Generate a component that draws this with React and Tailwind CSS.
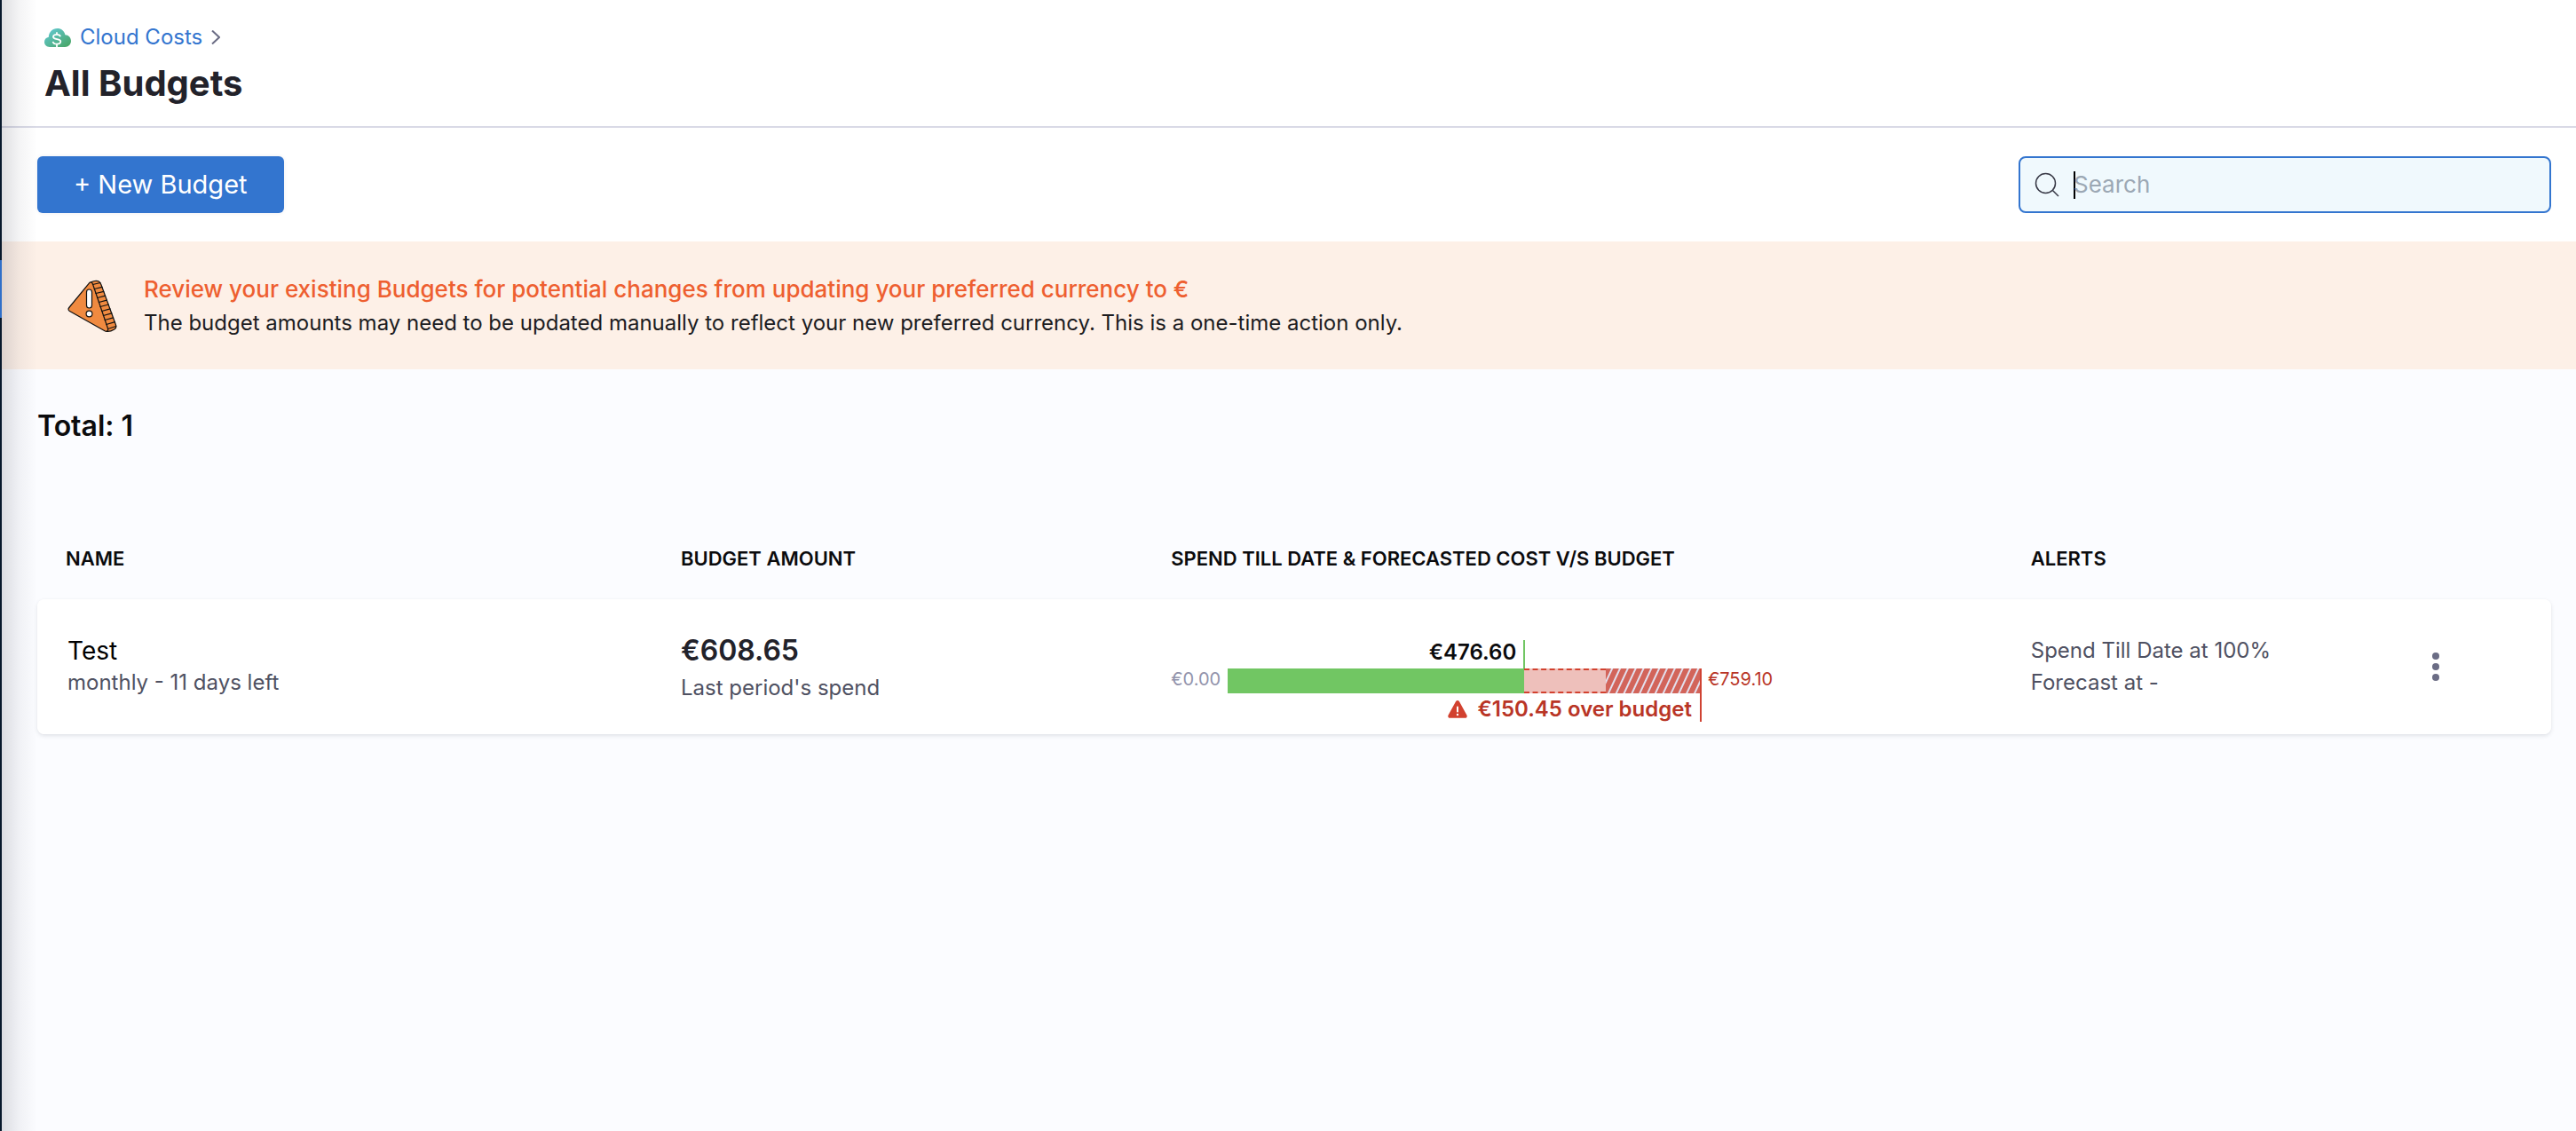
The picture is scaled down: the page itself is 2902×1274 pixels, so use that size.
const BUDGET = 608.65
const SPENT = 476.6
const FORECAST = 759.1

const percent = (value) => `${(value / FORECAST) * 100}%`

function CloudCostIcon() {
  return (
    <svg viewBox="0 0 30 21" className="h-[21px] w-[30px]" aria-hidden="true">
      <defs>
        <linearGradient id="cloud" x1="0" y1="0" x2="1" y2="1">
          <stop offset="0.15" stopColor="#5fc6c9" />
          <stop offset="1" stopColor="#47a35f" />
        </linearGradient>
      </defs>
      <path
        fill="url(#cloud)"
        d="M6 21C2.500 21 0 18.600 0 15.300 0 12.300 2 10.200 4.800 9.700 5.100 4 9.200 0 14.500 0c4.600 0 7.900 2.700 8.900 7.200 3.800.2 6.600 3 6.600 6.800 0 4-2.900 7-6.800 7z"
      />
      <path
        fill="none"
        stroke="#fff"
        strokeWidth="1.800"
        d="M18 9.200C17.700 7.700 16.300 6.900 14 6.900c-2.400 0-4 .9-4 2.600 0 3.800 8.300 1.600 8.300 5.300 0 1.800-1.700 2.800-4.200 2.800-2.600 0-4.200-1-4.500-2.800M14 4.200v2.700M14 17.600V21"
      />
    </svg>
  )
}

function WarningSignIcon() {
  return (
    <svg viewBox="0 0 56 60" className="h-[60px] w-14 shrink-0" aria-hidden="true">
      <g stroke="#111" strokeWidth="1.200" strokeLinejoin="round" strokeLinecap="round">
        <path
          fill="#f08a40"
          d="M26 3.500C28 1.500 33 .8 35 1.800c1.500.7 2.200 2 3 4L54.500 51c.8 2.500.2 4-1.700 5-2.300 1.400-6.500 2.800-9 2.300z"
        />
        <path
          fill="#f08a40"
          d="M24.500 3.800 1.800 31.500C.6 33 .8 34.600 2.500 35.500L42 57.800c2.500 1.200 4.300-.2 3.500-2.800L28.500 5c-.8-2.200-2.600-2.800-4-1.200z"
        />
        <path
          fill="none"
          d="M28.500 5.500 37 3.500M30.300 10.500 39 8.300M32 15.500l8.800-2.200M33.700 20.500l8.900-2.300M35.400 25.500l9-2.400M37 30.500l9.200-2.500M38.700 35.500l9.300-2.600M40.400 40.500l9.500-2.700M42.100 45.500l9.500-2.700M43.800 50.500l9.700-2.800M45.500 55.500l9.200-3"
        />
        <rect x="21.500" y="11" width="6" height="21" rx="3" fill="#fff" />
        <circle cx="24.500" cy="38.500" r="3.400" fill="#fff" />
      </g>
    </svg>
  )
}

function AlertTriangleIcon() {
  return (
    <svg viewBox="0 0 22 20" className="h-5 w-[22px]" aria-hidden="true">
      <path
        fill="#d2412f"
        d="M9 1.200c.9-1.600 3.100-1.600 4 0l8.400 15.200c.9 1.600 0 3.300-1.900 3.300h-17c-1.900 0-2.800-1.700-1.900-3.300z"
      />
      <path stroke="#fff" strokeWidth="2" strokeLinecap="round" d="M11 7.500v5" />
      <circle cx="11" cy="16" r="1.200" fill="#fff" />
    </svg>
  )
}

function SpendChart() {
  return (
    <div className="grid w-[70%] grid-cols-[auto_1fr_auto] grid-rows-[32px_28px_32px] text-[20px] leading-6">
      <div className="col-start-2 flex">
        <div
          className="flex items-center justify-end border-r-2 border-[#71c663] pr-2 pb-1 text-[24px] leading-7 font-semibold text-[#0b0b0d]"
          style={{ width: percent(SPENT) }}
        >
          €476.60
        </div>
      </div>
      <span className="col-start-1 row-start-2 pr-2 text-[#9293ab]">€0.00</span>
      <div className="col-start-2 row-start-2 flex border-r-2 border-[#cf4232]">
        <div className="bg-[#71c663]" style={{ width: percent(SPENT) }} />
        <div
          className="border-y-2 border-dashed border-[#d2412f] bg-[#eec0bb]"
          style={{ width: percent(BUDGET - SPENT) }}
        />
        <div className="flex-1 bg-[repeating-linear-gradient(115deg,#d2645a_0px,#d2645a_5px,#e3e0ee_6px,#e3e0ee_7px,#d2645a_8px)]" />
      </div>
      <span className="col-start-3 row-start-2 pl-[7px] text-[#b93526]">€759.10</span>
      <div className="col-start-2 row-start-3 flex items-center justify-end gap-3 border-r-2 border-[#cf4232] pt-1 pr-[9px] text-[24px] leading-7 font-semibold whitespace-nowrap text-[#b93526]">
        <AlertTriangleIcon />
        €150.45 over budget
      </div>
    </div>
  )
}

function BudgetTable() {
  return (
    <table className="mt-[115px] w-full table-fixed border-separate border-spacing-0 text-left">
      <colgroup>
        <col className="w-[25.6%]" />
        <col className="w-[19.5%]" />
        <col className="w-[34.2%]" />
        <col className="w-[15.4%]" />
        <col />
      </colgroup>
      <thead>
        <tr className="text-[22px] leading-7 text-[#0b0b0d]">
          <th className="pb-8 pl-8 font-semibold">NAME</th>
          <th className="pb-8 font-semibold">BUDGET AMOUNT</th>
          <th className="pb-8 font-semibold">SPEND TILL DATE &amp; FORECASTED COST V/S BUDGET</th>
          <th className="pb-8 font-semibold">ALERTS</th>
          <td />
        </tr>
      </thead>
      <tbody>
        <tr className="h-[152px] rounded-lg align-top text-[24px] leading-9 text-[#4f5162] shadow-[0_2px_4px_rgba(96,97,112,0.16),0_0_2px_rgba(40,41,61,0.04)]">
          <td className="rounded-l-lg bg-white pt-10 pl-[34px]">
            <div className="text-[28px] text-black">Test</div>
            <div>monthly - 11 days left</div>
          </td>
          <td className="bg-white pt-10">
            <div className="text-[32px] font-semibold text-[#22222a]">€608.65</div>
            <div className="pt-1.5">Last period's spend</div>
          </td>
          <td className="bg-white pt-[46px]">
            <SpendChart />
          </td>
          <td className="bg-white pt-10">
            <div>Spend Till Date at 100%</div>
            <div>Forecast at -</div>
          </td>
          <td className="rounded-r-lg bg-white pt-[52px]">
            <button type="button" aria-label="Budget options" className="flex h-12 w-10 items-center justify-center">
              <svg viewBox="0 0 10 32" className="h-8 w-[10px] fill-[#6b6d85]" aria-hidden="true">
                <circle cx="5" cy="4" r="4" />
                <circle cx="5" cy="16" r="4" />
                <circle cx="5" cy="28" r="4" />
              </svg>
            </button>
          </td>
        </tr>
      </tbody>
    </table>
  )
}

export default function App() {
  return (
    <div className="flex min-h-screen bg-[#fbfcff] font-['Inter',sans-serif]">
      <div className="w-[2px] shrink-0 bg-[#07182b] pt-[293px]">
        <div className="h-[65px] bg-[#2f6fc9]" />
      </div>
      <div className="relative min-w-0 flex-1">
        <header className="border-b-2 border-[#d9dae6] bg-white pt-7 pb-[18px] pl-12">
          <nav aria-label="Breadcrumb" className="flex items-center">
            <CloudCostIcon />
            <a href="#cloud-costs" className="ml-[10px] text-[24px] leading-7 text-[#3375cf]">
              Cloud Costs
            </a>
            <svg viewBox="0 0 10 16" className="ml-[10px] h-4 w-[10px]" aria-hidden="true">
              <path fill="none" stroke="#6b6d85" strokeWidth="2" d="m1 .5 8 7.500-8 7.500" />
            </svg>
          </nav>
          <h1 className="mt-2 text-[40px] leading-[60px] font-bold text-[#22222a]">All Budgets</h1>
        </header>

        <div className="flex items-center justify-between bg-white py-8 pr-7 pl-10">
          <button
            type="button"
            className="h-16 rounded-md bg-[#3375cf] px-[41px] text-[29px] text-white shadow-[0_0_4px_rgba(40,41,61,0.08)]"
          >
            + New Budget
          </button>
          <div className="flex h-16 w-[600px] items-center rounded-lg border-2 border-[#3375cf] bg-[#f0f9fd] pl-4">
            <svg viewBox="0 0 28 28" className="h-7 w-7" aria-hidden="true">
              <g fill="none" stroke="#383946" strokeWidth="1.500">
                <circle cx="12.500" cy="12.500" r="11" />
                <path d="m20.500 20.500 6.500 6.500" />
              </g>
            </svg>
            <span className="ml-4 h-[31px] w-[2px] bg-black" />
            <input
              type="text"
              aria-label="Search"
              placeholder="Search"
              className="-ml-0.5 min-w-0 flex-1 bg-transparent text-[26px] leading-8 text-[#22222a] outline-none placeholder:text-[#9ca8b4]"
            />
          </div>
        </div>

        <section className="flex items-center gap-[30px] bg-[#fdf0e7] pt-9 pb-[34px] pl-[74px]">
          <WarningSignIcon />
          <div>
            <h2 className="text-[26px] leading-9 font-medium text-[#ee5f30]">
              Review your existing Budgets for potential changes from updating your preferred currency to €
            </h2>
            <p className="mt-0.5 text-[24px] leading-9 text-[#1c1c1f]">
              The budget amounts may need to be updated manually to reflect your new preferred currency. This is a
              one-time action only.
            </p>
          </div>
        </section>

        <main className="pt-11 pr-7 pl-10">
          <h2 className="text-[32px] leading-10 font-semibold text-[#0b0b0d]">Total: 1</h2>
          <BudgetTable />
        </main>

        <div className="pointer-events-none absolute inset-y-0 left-0 w-10 bg-linear-to-r from-[#28293d]/15 via-[#28293d]/5 to-transparent" />
      </div>
    </div>
  )
}
